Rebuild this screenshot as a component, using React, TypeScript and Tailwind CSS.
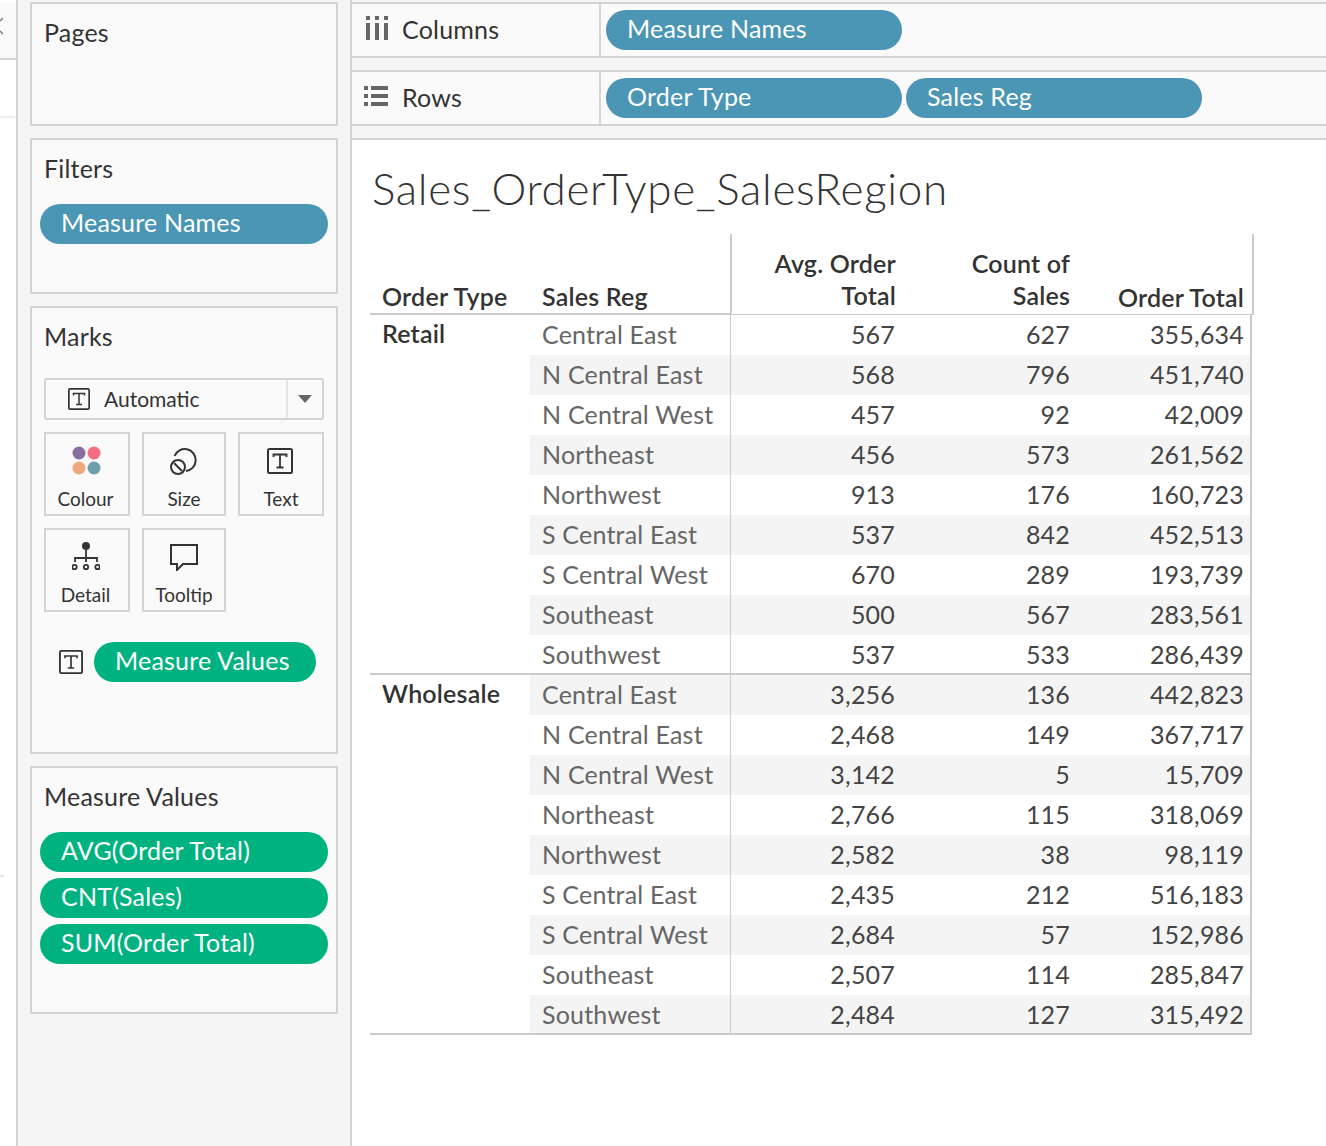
const blue = 'bg-[#4a96b4]';
const green = 'bg-[#00b27f]';

const retail = [
  ['Central East', '567', '627', '355,634'],
  ['N Central East', '568', '796', '451,740'],
  ['N Central West', '457', '92', '42,009'],
  ['Northeast', '456', '573', '261,562'],
  ['Northwest', '913', '176', '160,723'],
  ['S Central East', '537', '842', '452,513'],
  ['S Central West', '670', '289', '193,739'],
  ['Southeast', '500', '567', '283,561'],
  ['Southwest', '537', '533', '286,439'],
];

const wholesale = [
  ['Central East', '3,256', '136', '442,823'],
  ['N Central East', '2,468', '149', '367,717'],
  ['N Central West', '3,142', '5', '15,709'],
  ['Northeast', '2,766', '115', '318,069'],
  ['Northwest', '2,582', '38', '98,119'],
  ['S Central East', '2,435', '212', '516,183'],
  ['S Central West', '2,684', '57', '152,986'],
  ['Southeast', '2,507', '114', '285,847'],
  ['Southwest', '2,484', '127', '315,492'],
];

function Pill({ label, color, className = '' }: { label: string; color: string; className?: string }) {
  return (
    <div className={`h-10 rounded-[20px] pl-[21px] text-white text-[25px] leading-9 ${color} ${className}`}>
      {label}
    </div>
  );
}

function TextIcon({ size }: { size: number }) {
  return (
    <svg width={size} height={size} viewBox="0 0 26 26" fill="none" stroke="#333" strokeWidth="2">
      <rect x="1" y="1" width="24" height="24" rx="1.5" />
      <path d="M6.500 9V6.500h13V9M13 6.500v13M9.500 19.500h7" strokeWidth="1.8" />
    </svg>
  );
}

function MarkCard({ label, labelClass = '', children }: { label: string; labelClass?: string; children: React.ReactNode }) {
  return (
    <div className="h-[84px] border-2 border-[#d4d4d4] flex flex-col items-center">
      <div className="h-[53px] w-full flex items-center justify-center">{children}</div>
      <div className={`text-[#333] text-[19px] leading-6 tracking-normal ${labelClass}`}>{label}</div>
    </div>
  );
}

function Shelf({ label, icon, children }: { label: string; icon: React.ReactNode; children: React.ReactNode }) {
  return (
    <div className="h-14 border-y-2 border-[#d4d4d4] bg-[#fafafa] flex">
      <div className="w-[249px] shrink-0 border-r-2 border-[#d4d4d4] flex items-center text-[#333] text-[25px]">
        <div className="w-[50px] pl-3 flex items-center">{icon}</div>
        {label}
      </div>
      <div className="flex gap-1 pl-[5px] pt-1.5">{children}</div>
    </div>
  );
}

function DataRows({ rows, stripeFirst }: { rows: string[][]; stripeFirst: boolean }) {
  return (
    <div className="w-[722px]">
      {rows.map((r, i) => (
        <div
          key={r[0]}
          className={`flex items-start text-[25px] leading-[38px] ${i === rows.length - 1 ? 'h-[38px]' : 'h-10'} ${(i % 2 === 0) === stripeFirst ? 'bg-[#f4f4f4]' : ''}`}
        >
          <div className="w-[201px] pl-3 text-[#666] border-r border-[#cccccc] h-full">{r[0]}</div>
          <div className="w-[165px] pr-[1px] text-right text-[#444]">{r[1]}</div>
          <div className="w-[174px] text-right text-[#444]">{r[2]}</div>
          <div className="w-[174px] text-right text-[#444]">{r[3]}</div>
          <div className="flex-1 h-full border-r-2 border-[#cccccc]" />
        </div>
      ))}
    </div>
  );
}

export default function App() {
  return (
    <div className="w-[1326px] h-[1146px] overflow-hidden flex bg-[#f5f5f5] font-['Lato',sans-serif] tracking-[0.2px]">
      {/* left strip */}
      <div className="w-[18px] shrink-0 border-r-2 border-[#d4d4d4] bg-white">
        <div className="h-[57px] mt-[3px] bg-[#fafafa] border-b-2 border-[#d4d4d4] pt-[14px]">
          <svg width="3" height="20" viewBox="0 0 3 20" fill="none" stroke="#777" strokeWidth="1.500">
            <path d="M3 1L0 4M0 14l3 3" />
          </svg>
        </div>
        <div className="h-[58px] w-[15px] border-b-2 border-[#eeeeee]" />
        <div className="h-[759px] w-1 border-b-2 border-[#e4e4e4]" />
      </div>

      {/* cards */}
      <div className="w-[334px] shrink-0 border-r-2 border-[#d4d4d4] pl-3 pt-0.5 flex flex-col gap-3">
        <div className="w-[308px] h-[124px] border-2 border-[#d4d4d4] bg-[#fafafa] pl-3 pt-2.5 text-[#333] text-[25px] leading-9">Pages</div>

        <div className="w-[308px] h-[156px] border-2 border-[#d4d4d4] bg-[#fafafa] px-2 pt-2.5">
          <div className="pl-1 text-[#333] text-[25px] leading-9 mb-[18px]">Filters</div>
          <Pill label="Measure Names" color={blue} />
        </div>

        <div className="w-[308px] h-[448px] border-2 border-[#d4d4d4] bg-[#fafafa] pl-3 pt-2.5">
          <div className="text-[#333] text-[25px] leading-9 mb-6">Marks</div>
          <div className="w-[280px] h-[42px] border-2 border-[#d4d4d4] rounded-[3px] flex items-center text-[#333] text-[21px] tracking-normal">
            <div className="flex-1 flex items-center pl-[22px] gap-[14px]">
              <TextIcon size={22} />
              Automatic
            </div>
            <div className="w-[36px] h-full border-l-2 border-[#e6e6e6] flex items-center justify-center">
              <svg width="14" height="8" viewBox="0 0 14 8"><path d="M0 0h14L7 8z" fill="#666" /></svg>
            </div>
          </div>

          <div className="grid grid-cols-[86px_84px_86px] gap-3 mt-3">
            <MarkCard label="Colour" labelClass="pr-[3px]">
              <svg width="30" height="30" viewBox="0 0 30 30">
                <circle cx="7" cy="7" r="6.5" fill="#8a6f9e" />
                <circle cx="22" cy="7" r="6.5" fill="#f76c80" />
                <circle cx="7" cy="22" r="6.5" fill="#f3a77d" />
                <circle cx="22" cy="22" r="6.5" fill="#6e9fae" />
              </svg>
            </MarkCard>
            <MarkCard label="Size">
              <svg width="30" height="30" viewBox="0 0 30 30" fill="none" stroke="#333" strokeWidth="2">
                <path d="M5.500 10A11 11 0 1 1 17 25" />
                <circle cx="9" cy="21" r="7" />
                <path d="M5 17l8 8" />
              </svg>
            </MarkCard>
            <MarkCard label="Text">
              <div className="-ml-[3px]"><TextIcon size={26} /></div>
            </MarkCard>
            <MarkCard label="Detail" labelClass="pr-[3px]">
              <svg width="28" height="30" viewBox="0 0 28 30" fill="none" stroke="#333" strokeWidth="1.800" className="-ml-[3px]">
                <circle cx="14" cy="4" r="4" fill="#333" stroke="none" />
                <path d="M14 8v12M3 20v-4h22v4" />
                <circle cx="2.500" cy="25" r="2.200" />
                <circle cx="14" cy="25" r="2.200" />
                <circle cx="25.500" cy="25" r="2.200" />
              </svg>
            </MarkCard>
            <MarkCard label="Tooltip">
              <svg width="30" height="28" viewBox="0 0 30 28" fill="none" stroke="#333" strokeWidth="2">
                <path d="M2 2h26v19H14l-6 6v-6H2z" />
              </svg>
            </MarkCard>
          </div>

          <div className="flex items-center mt-[30px] ml-[15px] gap-[11px]">
            <TextIcon size={24} />
            <Pill label="Measure Values" color={green} className="w-[222px]" />
          </div>
        </div>

        <div className="w-[308px] h-[248px] border-2 border-[#d4d4d4] bg-[#fafafa] px-2 pt-2.5">
          <div className="pl-1 text-[#333] text-[25px] leading-9 mb-[18px]">Measure Values</div>
          <div className="flex flex-col gap-1.5">
            <Pill label="AVG(Order Total)" color={green} />
            <Pill label="CNT(Sales)" color={green} />
            <Pill label="SUM(Order Total)" color={green} />
          </div>
        </div>
      </div>

      {/* main */}
      <div className="flex-1 min-w-0 pt-0.5 flex flex-col gap-3">
        <Shelf
          label="Columns"
          icon={
            <svg width="22" height="24" viewBox="0 0 22 24" fill="#666" className="ml-0.5 -mt-1">
              <rect x="0" y="0" width="4" height="4" />
              <rect x="0" y="7" width="4" height="17" />
              <rect x="9" y="0" width="4" height="4" />
              <rect x="9" y="7" width="4" height="17" />
              <rect x="18" y="0" width="4" height="4" />
              <rect x="18" y="7" width="4" height="17" />
            </svg>
          }
        >
          <Pill label="Measure Names" color={blue} className="w-[296px]" />
        </Shelf>
        <Shelf
          label="Rows"
          icon={
            <svg width="24" height="20" viewBox="0 0 24 20" fill="#666" className="-mt-1">
              <rect x="0" y="0" width="4" height="4" />
              <rect x="0" y="8" width="4" height="4" />
              <rect x="0" y="16" width="4" height="4" />
              <rect x="7" y="0" width="17" height="4" />
              <rect x="7" y="8" width="17" height="4" />
              <rect x="7" y="16" width="17" height="4" />
            </svg>
          }
        >
          <Pill label="Order Type" color={blue} className="w-[296px]" />
          <Pill label="Sales Reg" color={blue} className="w-[296px]" />
        </Shelf>

        <div className="flex-1 border-t-2 border-[#d4d4d4] bg-white pl-[18px]">
          <div className="h-[94px] pl-[2px] pt-4 text-[44px] font-light text-[#333] leading-[64px] tracking-[0.65px]">Sales_OrderType_SalesRegion</div>

          {/* header */}
          <div className="h-[81px] w-[884px] flex items-end font-semibold text-[25px] text-[#333] leading-8 tracking-[0.2px]">
            <div className="w-[160px] pl-3 pb-[1px] h-full flex items-end border-b-2 border-[#cccccc]">Order Type</div>
            <div className="w-[202px] pl-3 pb-[1px] h-full flex items-end border-b-2 border-r-2 border-[#cccccc]">Sales Reg</div>
            <div className="flex-1 h-full flex items-end border-b border-r-2 border-[#cccccc] pb-[1px]">
              <div className="w-[164px] text-right pb-0.5">Avg. Order<br />Total</div>
              <div className="w-[174px] text-right pb-0.5">Count of<br />Sales</div>
              <div className="w-[174px] text-right">Order Total</div>
            </div>
          </div>

          {/* Retail */}
          <div className="flex w-[882px] border-b-2 border-[#cccccc]">
            <div className="w-[160px] pl-3 font-semibold text-[25px] text-[#333] leading-9">Retail</div>
            <DataRows rows={retail} stripeFirst={false} />
          </div>

          {/* Wholesale */}
          <div className="flex w-[882px] border-b-2 border-[#cccccc]">
            <div className="w-[160px] pl-3 font-semibold text-[25px] text-[#333] leading-9">Wholesale</div>
            <DataRows rows={wholesale} stripeFirst={true} />
          </div>
        </div>
      </div>
    </div>
  );
}
